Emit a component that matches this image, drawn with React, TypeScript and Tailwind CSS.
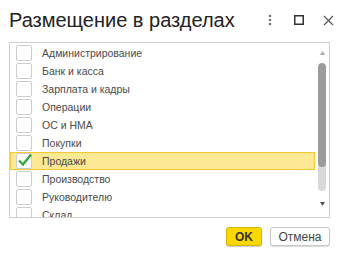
import { useState } from 'react';

const sections = [
  'Администрирование',
  'Банк и касса',
  'Зарплата и кадры',
  'Операции',
  'ОС и НМА',
  'Покупки',
  'Продажи',
  'Производство',
  'Руководителю',
  'Склад',
  'Справочники',
];

export default function App() {
  const [checked, setChecked] = useState<string[]>(['Продажи']);
  const [current, setCurrent] = useState('Продажи');

  const toggle = (name: string) => {
    setCurrent(name);
    setChecked((prev) => (prev.includes(name) ? prev.filter((n) => n !== name) : [...prev, name]));
  };

  return (
    <div className="w-[344px] h-[256px] bg-white font-['Liberation_Sans',Arial,sans-serif] overflow-hidden">
      {/* Header */}
      <div className="flex items-center h-[40px] pl-[9px] pr-[10px]">
        <h1 className="flex-1 text-[20px] text-[#222] leading-none">Размещение в разделах</h1>
        <div className="flex items-center gap-[19px] text-[#555]">
          <svg width="4" height="12" viewBox="0 0 4 12" className="text-[#777]">
            <circle cx="2" cy="2" r="1.3" fill="currentColor" />
            <circle cx="2" cy="6" r="1.3" fill="currentColor" />
            <circle cx="2" cy="10" r="1.3" fill="currentColor" />
          </svg>
          <svg width="10" height="10" viewBox="0 0 10 10" className="ml-[3px]">
            <rect x="0.75" y="0.75" width="8.5" height="8.5" fill="none" stroke="#333" strokeWidth="1.5" />
          </svg>
          <svg width="11" height="11" viewBox="0 0 11 11">
            <path d="M1 1L10 10M10 1L1 10" stroke="#555" strokeWidth="1.2" />
          </svg>
        </div>
      </div>

      {/* List */}
      <div className="ml-[9px] mr-[14px] mt-[2px] h-[176px] border border-[#cfcfcf] flex overflow-hidden">
        <div className="flex-1 pt-px">
          {sections.map((name) => {
            const isCurrent = current === name;
            const isChecked = checked.includes(name);
            return (
              <div
                key={name}
                onClick={() => toggle(name)}
                className={`flex items-center h-[18px] pl-[5px] border cursor-default ${
                  isCurrent ? 'bg-[#fde993] border-[#f4c830]' : 'border-transparent'
                }`}
              >
                <span className="relative w-[16px] h-[16px] border border-[#cdcdcd] rounded-[2px] bg-white shrink-0">
                  {isChecked && (
                    <svg width="18" height="16" viewBox="0 0 18 16" className="absolute left-[-1px] top-[-2px]">
                      <path d="M3 8.5L7 12.5L15 2.5" fill="none" stroke="#2ea836" strokeWidth="2.4" />
                    </svg>
                  )}
                </span>
                <span className="ml-[10px] text-[10.5px] text-[#4a4a4a] leading-none">{name}</span>
              </div>
            );
          })}
        </div>
        {/* Scrollbar */}
        <div className="w-[14px] flex flex-col items-center pt-[8px]">
          <svg width="5" height="4" viewBox="0 0 5 4">
            <path d="M2.5 0L5 4H0Z" fill="#aaa" />
          </svg>
          <div className="mt-[8px] w-[8px] h-[128px] rounded-full bg-[#d8d8d8] overflow-hidden">
            <div className="h-[104px] rounded-full bg-[#9b9b9b]" />
          </div>
          <svg width="5" height="4" viewBox="0 0 5 4" className="mt-[11px]">
            <path d="M0 0H5L2.5 4Z" fill="#555" />
          </svg>
        </div>
      </div>

      {/* Buttons */}
      <div className="flex justify-end gap-[8px] mt-[9px] mr-[14px]">
        <button className="w-[36px] h-[19px] rounded-[3px] border border-[#d8b400] bg-[#fbd800] text-[12px] font-bold text-[#333] leading-none shadow-[0_1px_1px_rgba(0,0,0,0.2)]">
          OK
        </button>
        <button className="w-[60px] h-[19px] rounded-[3px] border border-[#c8c8c8] bg-white text-[12px] text-[#444] leading-none shadow-[0_1px_1px_rgba(0,0,0,0.15)]">
          Отмена
        </button>
      </div>
    </div>
  );
}
